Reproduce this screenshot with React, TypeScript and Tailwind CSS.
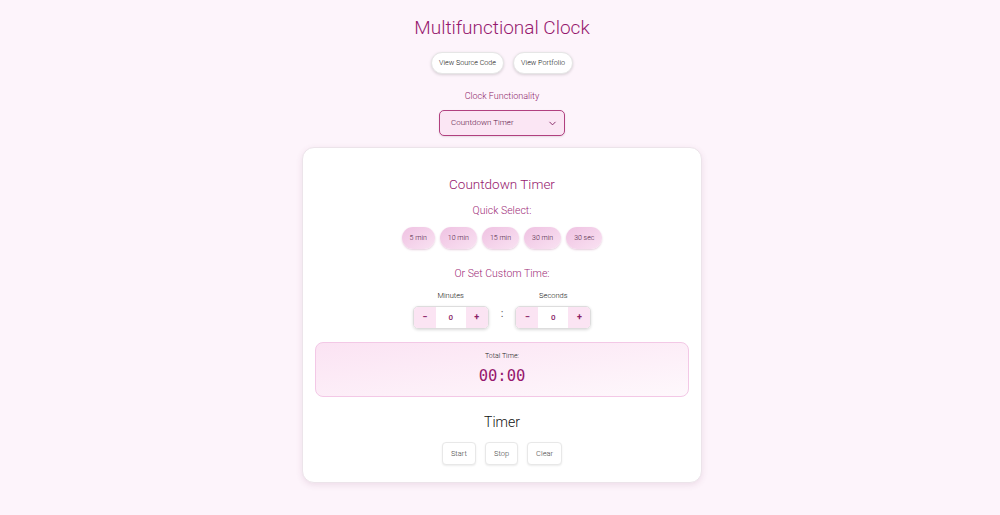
import React from 'react';

const pink = 'text-[#96186e]';

function QuickButton({ label }: { label: string }) {
  return (
    <button className="h-[22px] px-[8px] rounded-[11px] bg-gradient-to-br from-[#efc2e2] to-[#f9e2f2] text-[7px] font-light text-[#4a1a3e] shadow-[0_1px_2px_rgba(150,60,120,0.25)]">
      {label}
    </button>
  );
}

function Stepper({ label }: { label: string }) {
  return (
    <div className="flex flex-col items-center gap-[5px]">
      <span className="text-[7.5px] font-light text-[#111]">{label}</span>
      <div className="flex h-[23px] w-[76px] rounded-[5px] border border-[#ddd] overflow-hidden shadow-[0_1px_3px_rgba(0,0,0,0.15)]">
        <span className="w-[22px] flex items-center justify-center bg-[#fbe4f3] text-[9px] font-bold text-[#8a1e66]">−</span>
        <span className="flex-1 flex items-center justify-center bg-white text-[8px] font-medium text-[#8a1e66]">0</span>
        <span className="w-[22px] flex items-center justify-center bg-[#fbe4f3] text-[9px] font-bold text-[#8a1e66]">+</span>
      </div>
    </div>
  );
}

function ActionButton({ label }: { label: string }) {
  return (
    <button className="h-[23px] px-[8px] rounded-[4px] bg-white border border-[#e8e8e8] text-[7.5px] font-light text-[#444] shadow-[0_1px_2px_rgba(0,0,0,0.08)]">
      {label}
    </button>
  );
}

export default function App() {
  return (
    <div className="min-h-[515px] w-full bg-[#fdf4fb] flex flex-col items-center font-['Roboto',sans-serif] pt-[15px] pl-[4px]">
      <h1 className={`text-[19px] font-light ${pink} leading-[26px]`}>Multifunctional Clock</h1>

      <div className="flex gap-[9px] mt-[11px]">
        <button className="h-[22px] px-[7px] rounded-full bg-white border border-[#e6e6e6] text-[7.2px] font-light text-[#111] shadow-[0_1px_3px_rgba(0,0,0,0.15)]">
          View Source Code
        </button>
        <button className="h-[22px] px-[7px] rounded-full bg-white border border-[#e6e6e6] text-[7.2px] font-light text-[#111] shadow-[0_1px_3px_rgba(0,0,0,0.15)]">
          View Portfolio
        </button>
      </div>

      <span className="mt-[15px] text-[9px] font-light text-[#8e2468] leading-[14px]">Clock Functionality</span>

      <div className="mt-[7px] w-[126px] h-[26px] rounded-[5px] border-[1.5px] border-[#b1407f] bg-[#fbe6f4] flex items-center justify-between pl-[11px] pr-[6px] shadow-[0_1px_2px_rgba(0,0,0,0.1)]">
        <span className="text-[8px] font-light text-[#5a1243]">Countdown Timer</span>
        <svg width="11" height="11" viewBox="0 0 24 24" fill="none" stroke="#7f1f5f" strokeWidth="2" strokeLinecap="round" strokeLinejoin="round">
          <path d="m6 9 6 6 6-6" />
        </svg>
      </div>

      <div className="mt-[11px] w-[400px] h-[336px] bg-white rounded-[12px] border border-[#ece4ea] shadow-[0_2px_6px_rgba(120,60,100,0.12)] flex flex-col items-center px-[12px] pt-[26px]">
        <h2 className={`text-[13.5px] font-light ${pink} leading-[20px]`}>Countdown Timer</h2>
        <h3 className="mt-[9px] text-[10.5px] font-light text-[#9e2c78] leading-[15px]">Quick Select:</h3>
        <div className="mt-[9px] flex gap-[5px]">
          <QuickButton label="5 min" />
          <QuickButton label="10 min" />
          <QuickButton label="15 min" />
          <QuickButton label="30 min" />
          <QuickButton label="30 sec" />
        </div>

        <h3 className="mt-[17px] text-[10.5px] font-light text-[#9e2c78] leading-[15px]">Or Set Custom Time:</h3>
        <div className="mt-[9px] flex items-center gap-[12px]">
          <Stepper label="Minutes" />
          <span className="mt-[10px] text-[11px] text-[#555]">:</span>
          <Stepper label="Seconds" />
        </div>

        <div className="mt-[13px] w-full h-[55px] rounded-[8px] border border-[#f3c8e6] bg-gradient-to-br from-[#fbe3f3] to-[#fef8fc] flex flex-col items-center pt-[8px]">
          <span className="text-[7px] font-light text-[#222] leading-[10px]">Total Time:</span>
          <span className={`mt-[5px] text-[15.5px] font-['DejaVu_Sans_Mono',monospace] ${pink} leading-[20px]`}>00:00</span>
        </div>

        <h2 className="mt-[15px] text-[14px] font-light text-[#111] leading-[20px]">Timer</h2>
        <div className="mt-[10px] flex gap-[9px]">
          <ActionButton label="Start" />
          <ActionButton label="Stop" />
          <ActionButton label="Clear" />
        </div>
      </div>
    </div>
  );
}
